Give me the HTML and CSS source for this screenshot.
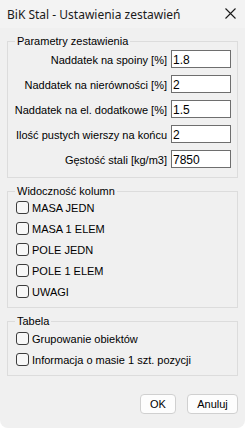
FILE: index.html
```html
<!DOCTYPE html>
<html lang="pl">
<head>
<meta charset="utf-8">
<title>BiK Stal - Ustawienia zestawień</title>
<link rel="stylesheet" href="styles.css">
</head>
<body>
<div class="window">
  <div class="titlebar">
    <span class="title">BiK Stal - Ustawienia zestawień</span>
    <svg class="close" width="11" height="11" viewBox="0 0 11 11"><path d="M0.5 0.5 L10.5 10.5 M10.5 0.5 L0.5 10.5" stroke="#1a1a1a" stroke-width="1.1" fill="none"/></svg>
  </div>
  <div class="content">
    <fieldset class="group params">
      <legend>Parametry zestawienia</legend>
      <div class="row"><label>Naddatek na spoiny [%]</label><input class="field" value="1.8"></div>
      <div class="row"><label>Naddatek na nierówności [%]</label><input class="field" value="2"></div>
      <div class="row"><label>Naddatek na el. dodatkowe [%]</label><input class="field" value="1.5"></div>
      <div class="row"><label>Ilość pustych wierszy na końcu</label><input class="field" value="2"></div>
      <div class="row"><label>Gęstość stali [kg/m3]</label><input class="field" value="7850"></div>
    </fieldset>
    <fieldset class="group checks">
      <legend>Widoczność kolumn</legend>
      <label class="check"><span class="box"></span>MASA JEDN</label>
      <label class="check"><span class="box"></span>MASA 1 ELEM</label>
      <label class="check"><span class="box"></span>POLE JEDN</label>
      <label class="check"><span class="box"></span>POLE 1 ELEM</label>
      <label class="check"><span class="box"></span>UWAGI</label>
    </fieldset>
    <fieldset class="group checks table">
      <legend>Tabela</legend>
      <label class="check"><span class="box"></span>Grupowanie obiektów</label>
      <label class="check"><span class="box"></span>Informacja o masie 1 szt. pozycji</label>
    </fieldset>
    <div class="buttons">
      <button class="btn ok">OK</button>
      <button class="btn cancel">Anuluj</button>
    </div>
  </div>
</div>
</body>
</html>
```

FILE: styles.css
```css
html, body {
  margin: 0;
  padding: 0;
  background: #ffffff;
}
.window {
  width: 245px;
  height: 428px;
  background: #f0f0f0;
  border-radius: 0 0 8px 8px;
  overflow: hidden;
  font-family: "Liberation Sans", Arial, sans-serif;
  font-size: 11px;
  color: #000;
}
.titlebar {
  height: 28px;
  background: #f3f3f3;
  display: flex;
  align-items: center;
  justify-content: space-between;
  padding: 0 9px 0 7px;
  box-sizing: border-box;
}
.title {
  font-family: "Noto Sans", "Open Sans", sans-serif;
  font-size: 12px;
  color: #1a1a1a;
  padding-top: 1px;
}
.close {
  display: block;
  margin-bottom: 1px;
}
.content {
  display: flex;
  flex-direction: column;
}
.group {
  margin: 7px 7px 0 7px;
  border: 1px solid #dcdcdc;
  padding: 0 6px 6px 8px;
  min-width: 0;
}
.group legend {
  padding: 0 2px;
  margin-left: -1px;
  line-height: 12px;
  height: 12px;
}
.params {
  padding-top: 3px;
  padding-bottom: 9px;
  display: flex;
  flex-direction: column;
  gap: 7px;
}
.row {
  display: flex;
  justify-content: flex-end;
  align-items: center;
  height: 18px;
  gap: 4px;
}
.row label {
  white-space: nowrap;
  padding-top: 1px;
}
.field {
  width: 60px;
  height: 18px;
  box-sizing: border-box;
  border: 1px solid #6e6e6e;
  background: #fff;
  font-family: "Liberation Sans", Arial, sans-serif;
  font-size: 12px;
  padding: 1px 1px 0 1px;
  margin: 0;
  color: #000;
  outline: none;
}
.checks {
  padding-bottom: 5px;
}
.check {
  display: flex;
  align-items: center;
  height: 21px;
  white-space: nowrap;
}
.box {
  width: 13px;
  height: 13px;
  box-sizing: border-box;
  border: 1px solid #3c3c3c;
  border-radius: 3px;
  background: #f7f7f7;
  margin-right: 3px;
}
.table {
  padding-top: 1px;
}
.buttons {
  display: flex;
  justify-content: flex-end;
  gap: 11px;
  margin: 18px 7px 0 0;
}
.btn {
  height: 20px;
  box-sizing: border-box;
  border: 1px solid #d0d0d0;
  border-radius: 4px;
  background: #fdfdfd;
  font-family: "Liberation Sans", Arial, sans-serif;
  font-size: 11px;
  color: #000;
  padding: 0;
  margin: 0;
}
.ok { width: 36px; }
.cancel { width: 51px; }
```
